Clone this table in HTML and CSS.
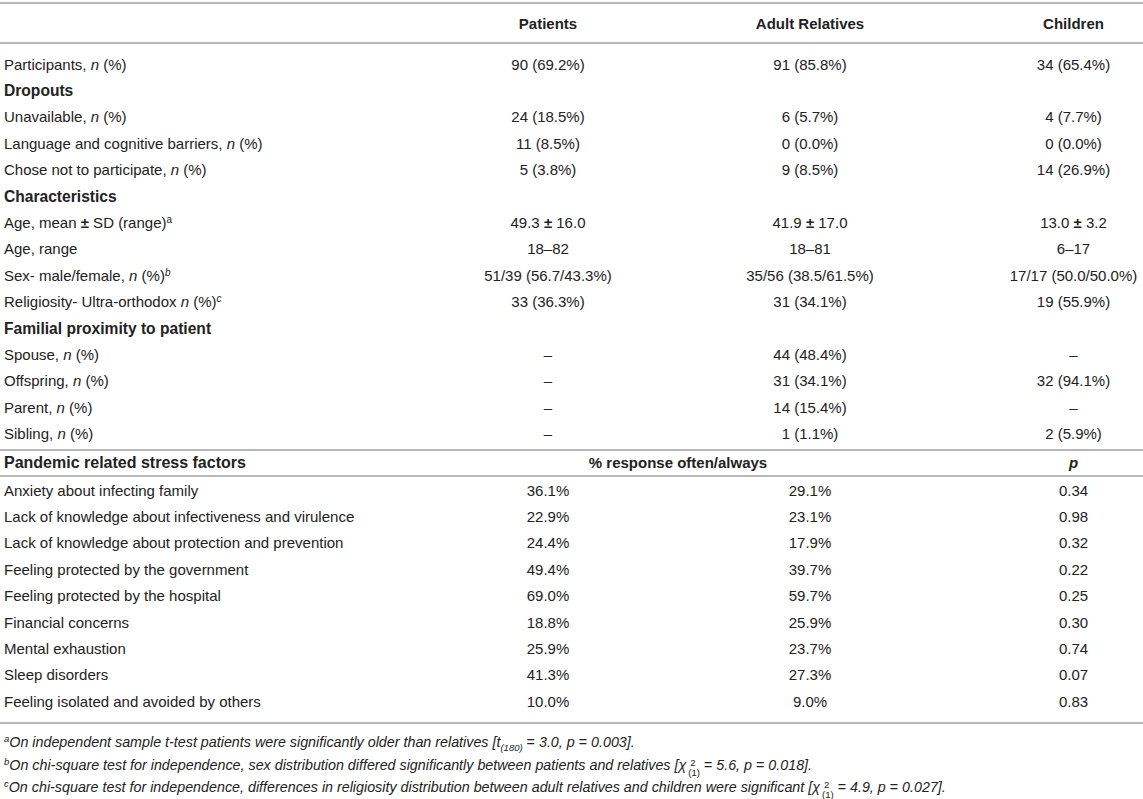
FILE: index.html
```html
<!DOCTYPE html>
<html lang="en">
<head>
<meta charset="utf-8">
<title>Table</title>
<link rel="stylesheet" href="styles.css">
</head>
<body>
<div class="wrap">
<table class="data">
  <colgroup>
    <col class="c1"><col class="c2"><col class="c3"><col class="c4">
  </colgroup>
  <thead>
    <tr><th class="lbl"></th><th>Patients</th><th>Adult Relatives</th><th class="last">Children</th></tr>
  </thead>
  <tbody class="demo">
    <tr class="first"><td class="lbl">Participants, <i>n</i> (%)</td><td>90 (69.2%)</td><td>91 (85.8%)</td><td class="last">34 (65.4%)</td></tr>
    <tr class="sec"><td class="lbl" colspan="4">Dropouts</td></tr>
    <tr><td class="lbl">Unavailable, <i>n</i> (%)</td><td>24 (18.5%)</td><td>6 (5.7%)</td><td class="last">4 (7.7%)</td></tr>
    <tr><td class="lbl">Language and cognitive barriers, <i>n</i> (%)</td><td>11 (8.5%)</td><td>0 (0.0%)</td><td class="last">0 (0.0%)</td></tr>
    <tr><td class="lbl">Chose not to participate, <i>n</i> (%)</td><td>5 (3.8%)</td><td>9 (8.5%)</td><td class="last">14 (26.9%)</td></tr>
    <tr class="sec"><td class="lbl" colspan="4">Characteristics</td></tr>
    <tr><td class="lbl">Age, mean <span class="pm">±</span> SD (range)<sup>a</sup></td><td>49.3 <span class="pm">±</span> 16.0</td><td>41.9 <span class="pm">±</span> 17.0</td><td class="last">13.0 <span class="pm">±</span> 3.2</td></tr>
    <tr><td class="lbl">Age, range</td><td>18–82</td><td>18–81</td><td class="last">6–17</td></tr>
    <tr><td class="lbl">Sex- male/female, <i>n</i> (%)<sup><i>b</i></sup></td><td>51/39 (56.7/43.3%)</td><td>35/56 (38.5/61.5%)</td><td class="last">17/17 (50.0/50.0%)</td></tr>
    <tr><td class="lbl">Religiosity- Ultra-orthodox <i>n</i> (%)<sup><i>c</i></sup></td><td>33 (36.3%)</td><td>31 (34.1%)</td><td class="last">19 (55.9%)</td></tr>
    <tr class="sec"><td class="lbl" colspan="4">Familial proximity to patient</td></tr>
    <tr><td class="lbl">Spouse, <i>n</i> (%)</td><td>–</td><td>44 (48.4%)</td><td class="last">–</td></tr>
    <tr><td class="lbl">Offspring, <i>n</i> (%)</td><td>–</td><td>31 (34.1%)</td><td class="last">32 (94.1%)</td></tr>
    <tr><td class="lbl">Parent, <i>n</i> (%)</td><td>–</td><td>14 (15.4%)</td><td class="last">–</td></tr>
    <tr class="lastrow"><td class="lbl">Sibling, <i>n</i> (%)</td><td>–</td><td>1 (1.1%)</td><td class="last">2 (5.9%)</td></tr>
  </tbody>
  <tbody class="stress">
    <tr class="shead"><th class="lbl">Pandemic related stress factors</th><th colspan="2">% response often/always</th><th class="last"><i>p</i></th></tr>
    <tr><td class="lbl">Anxiety about infecting family</td><td>36.1%</td><td>29.1%</td><td class="last">0.34</td></tr>
    <tr><td class="lbl">Lack of knowledge about infectiveness and virulence</td><td>22.9%</td><td>23.1%</td><td class="last">0.98</td></tr>
    <tr><td class="lbl">Lack of knowledge about protection and prevention</td><td>24.4%</td><td>17.9%</td><td class="last">0.32</td></tr>
    <tr><td class="lbl">Feeling protected by the government</td><td>49.4%</td><td>39.7%</td><td class="last">0.22</td></tr>
    <tr><td class="lbl">Feeling protected by the hospital</td><td>69.0%</td><td>59.7%</td><td class="last">0.25</td></tr>
    <tr><td class="lbl">Financial concerns</td><td>18.8%</td><td>25.9%</td><td class="last">0.30</td></tr>
    <tr><td class="lbl">Mental exhaustion</td><td>25.9%</td><td>23.7%</td><td class="last">0.74</td></tr>
    <tr><td class="lbl">Sleep disorders</td><td>41.3%</td><td>27.3%</td><td class="last">0.07</td></tr>
    <tr class="lastrow"><td class="lbl">Feeling isolated and avoided by others</td><td>10.0%</td><td>9.0%</td><td class="last">0.83</td></tr>
  </tbody>
</table>
<div class="notes">
  <p><sup>a</sup>On independent sample t-test patients were significantly older than relatives [<span class="m">t</span><sub>(180)</sub> <span class="eq">=</span> 3.0, <span class="m">p</span> <span class="eq">=</span> 0.003].</p>
  <p><sup>b</sup>On chi-square test for independence, sex distribution differed significantly between patients and relatives [<span class="m">χ</span><span class="ss"><span class="sp">2</span><span class="sb">(1)</span></span> <span class="eq">=</span> 5.6, <span class="m">p</span> <span class="eq">=</span> 0.018].</p>
  <p><sup>c</sup>On chi-square test for independence, differences in religiosity distribution between adult relatives and children were significant [<span class="m">χ</span><span class="ss"><span class="sp">2</span><span class="sb">(1)</span></span> <span class="eq">=</span> 4.9, <span class="m">p</span> <span class="eq">=</span> 0.027].</p>
</div>
</div>
</body>
</html>
```

FILE: styles.css
```css
html, body {
  margin: 0;
  padding: 0;
  background: #ffffff;
}
body {
  font-family: "Liberation Sans", Arial, sans-serif;
  font-size: 15px;
  color: #222222;
}
.wrap {
  padding-top: 2px;
  width: 1143px;
}
.data {
  width: 1143px;
  border-collapse: collapse;
  table-layout: fixed;
  border-top: 2px solid #b8b8b8;
}
.c1 { width: 416px; }
.c2 { width: 264px; }
.c3 { width: 260px; }
.c4 { width: 203px; }

.data th, .data td {
  padding: 0;
  text-align: center;
  vertical-align: middle;
  font-weight: normal;
  white-space: nowrap;
}
.data .lbl {
  text-align: left;
  padding-left: 4px;
}
.data .last {
  padding-left: 64px;
}
.data thead th {
  height: 38px;
  font-weight: bold;
  border-bottom: 2px solid #b8b8b8;
}
.data tbody td,
.data tbody th {
  height: 26.4px;
  line-height: 17px;
}
.demo tr.first td {
  padding-top: 7px;
}
.demo tr.lastrow td {
  padding-bottom: 2px;
}
.sec td {
  font-weight: bold;
  font-size: 15.6px;
}
.stress tr.shead th {
  height: 24px;
  font-weight: bold;
  border-top: 2px solid #b8b8b8;
  border-bottom: 2px solid #b8b8b8;
}
.stress tr.shead th.lbl {
  font-size: 16px;
}
.stress tr.lastrow td {
  padding-bottom: 8px;
  border-bottom: 2px solid #b8b8b8;
}
sup {
  font-size: 10px;
  line-height: 0;
  vertical-align: 5px;
}
.pm {
  font-weight: bold;
}
.notes {
  padding: 7px 0 0 4px;
  font-style: italic;
  font-size: 14.3px;
}
.notes p {
  margin: 0;
  height: 22.5px;
  line-height: 22.5px;
  white-space: nowrap;
}
.notes sup {
  font-size: 9.5px;
  vertical-align: 5px;
}
.notes sub {
  font-size: 9.5px;
  line-height: 0;
  vertical-align: -4px;
}
.eq {
  font-style: normal;
}
.ss {
  display: inline-block;
  vertical-align: -6px;
  font-size: 9.5px;
  line-height: 10px;
  font-style: normal;
  margin-left: 2px;
}
.ss .sp,
.ss .sb {
  display: block;
}
.ss .sp {
  padding-left: 2px;
}
```
